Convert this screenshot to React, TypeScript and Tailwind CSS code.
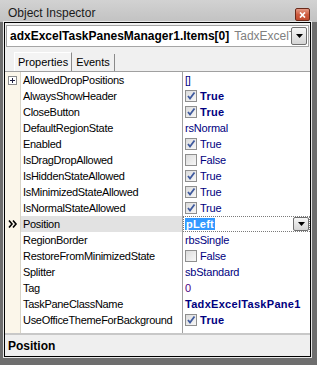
import React from "react";

type Row = {
  name: string;
  value: string;
  check?: boolean;
  checked?: boolean;
  bold?: boolean;
  plus?: boolean;
  selected?: boolean;
  color?: string;
};

const rows: Row[] = [
  { name: "AllowedDropPositions", value: "[]", plus: true },
  { name: "AlwaysShowHeader", value: "True", check: true, checked: true, bold: true },
  { name: "CloseButton", value: "True", check: true, checked: true, bold: true },
  { name: "DefaultRegionState", value: "rsNormal" },
  { name: "Enabled", value: "True", check: true, checked: true },
  { name: "IsDragDropAllowed", value: "False", check: true, checked: false },
  { name: "IsHiddenStateAllowed", value: "True", check: true, checked: true },
  { name: "IsMinimizedStateAllowed", value: "True", check: true, checked: true },
  { name: "IsNormalStateAllowed", value: "True", check: true, checked: true },
  { name: "Position", value: "pLeft", selected: true },
  { name: "RegionBorder", value: "rbsSingle" },
  { name: "RestoreFromMinimizedState", value: "False", check: true, checked: false },
  { name: "Splitter", value: "sbStandard" },
  { name: "Tag", value: "0", color: "#4b0082" },
  { name: "TaskPaneClassName", value: "TadxExcelTaskPane1", bold: true },
  { name: "UseOfficeThemeForBackground", value: "True", check: true, checked: true, bold: true },
];

const font = { fontFamily: '"Liberation Sans", Arial, sans-serif' };

function CheckBox({ checked }: { checked: boolean }) {
  return (
    <div className="w-[12px] h-[12px] shrink-0 border border-[#8f8f8f] bg-gradient-to-br from-[#dcdcdc] to-[#f7f7f7] relative">
      {checked && (
        <svg width="10" height="10" viewBox="0 0 10 10" className="absolute left-0 top-0">
          <path d="M2 5 L4 7.5 L8.5 1.5" fill="none" stroke="#3f5a9e" strokeWidth="1.8" />
        </svg>
      )}
    </div>
  );
}

function DropButton({ h }: { h: number }) {
  return (
    <div
      className="w-[16px] shrink-0 rounded-[2px] border border-[#6f6f6f] bg-gradient-to-b from-[#f6f6f6] to-[#d5d5d5] flex items-center justify-center"
      style={{ height: h }}
    >
      <svg width="7" height="4" viewBox="0 0 7 4">
        <path d="M0 0 H7 L3.5 4 Z" fill="#000" />
      </svg>
    </div>
  );
}

function GridRow({ r }: { r: Row }) {
  return (
    <div className="flex h-[16px]">
      <div className="w-[16px] shrink-0 bg-[#fbf6ea] border-r border-[#d8d4c8] flex items-center justify-center">
        {r.plus && (
          <div className="w-[9px] h-[9px] border border-[#8a8a8a] bg-white flex items-center justify-center">
            <svg width="5" height="5" viewBox="0 0 5 5">
              <path d="M0 2.5 H5 M2.5 0 V5" stroke="#202040" strokeWidth="1" />
            </svg>
          </div>
        )}
        {r.selected && (
          <svg width="10" height="8" viewBox="0 0 10 8">
            <path d="M1 0.5 L4 4 L1 7.5 M5 0.5 L8 4 L5 7.5" fill="none" stroke="#000" strokeWidth="1.6" />
          </svg>
        )}
      </div>
      <div
        className={`w-[162px] shrink-0 border-r border-[#a0a0a0] pl-[2px] flex items-center overflow-hidden whitespace-nowrap text-[11px] tracking-[-0.3px] text-black ${
          r.selected ? "bg-[#e2e2e2]" : ""
        }`}
      >
        {r.name}
      </div>
      <div
        className={`flex-1 flex items-center overflow-hidden whitespace-nowrap text-[11px] ${
          r.selected ? "border border-dotted border-[#7a7a7a] pl-[1px] pr-[0px]" : "pl-[2px]"
        }`}
        style={{ color: r.color ?? "#000080" }}
      >
        {r.check && (
          <div className="mr-[3px]">
            <CheckBox checked={!!r.checked} />
          </div>
        )}
        {r.selected ? (
          <>
            <span className="bg-[#3399ff] text-white font-bold px-[1px] h-[12px] leading-[12px] tracking-[0.2px]">
              {r.value}
            </span>
            <div className="flex-1" />
            <DropButton h={14} />
          </>
        ) : (
          <span className={r.bold ? "font-bold tracking-[0.3px]" : "tracking-[-0.2px]"}>{r.value}</span>
        )}
      </div>
    </div>
  );
}

export default function App() {
  return (
    <div className="w-[317px] h-[365px] bg-[#c4c4c4] flex flex-col overflow-hidden" style={font}>
      {/* title bar */}
      <div className="h-[22px] shrink-0 flex items-start justify-between pl-[8px] pr-[7px] bg-gradient-to-b from-[#d2d2d2] to-[#c2c2c2]">
        <div className="text-[12px] text-[#1a1a1a] leading-[14px] mt-[6px]">Object Inspector</div>
        <div className="mt-[8px] w-[15px] h-[13px] rounded-[2px] border border-[#6a2a1a] bg-gradient-to-b from-[#e49a86] via-[#cf5c40] to-[#c04a2e] flex items-center justify-center">
          <svg width="7" height="6" viewBox="0 0 7 6">
            <path d="M1 0.5 L6 5.5 M6 0.5 L1 5.5" stroke="#fff" strokeWidth="1.7" />
          </svg>
        </div>
      </div>
      {/* body */}
      <div className="flex-1 flex flex-col pl-[4px] pr-[6px] pb-[8px] bg-[#6e6e6e]">
        <div className="flex-1 flex flex-col border border-black bg-[#f0f0f0] outline outline-1 outline-[#e8e8e8]">
          {/* combo */}
          <div className="h-[22px] mt-[2px] mx-[1px] flex items-center bg-white border border-[#a5a5a5] pl-[3px] pr-[1px]">
            <span className="text-[12px] font-bold text-black whitespace-nowrap">adxExcelTaskPanesManager1.Items[0]</span>
            <span className="ml-[5px] text-[12px] text-[#808080] whitespace-nowrap overflow-hidden flex-1">TadxExcelTaskPane</span>
            <DropButton h={18} />
          </div>
          {/* tabs */}
          <div className="h-[25px] flex items-end pl-[9px] border-b border-[#a0a0a0]">
            <div className="h-[19px] px-[3px] border-l border-t border-r border-l-white border-t-white border-r-[#8a8a8a] bg-[#f4f4f4] text-[11px] flex items-center">
              Properties
            </div>
            <div className="h-[17px] px-[4px] border-r border-[#8a8a8a] text-[11px] flex items-center">Events</div>
          </div>
          {/* grid */}
          <div className="flex-1 flex flex-col bg-white">
            {rows.map((r) => (
              <GridRow key={r.name} r={r} />
            ))}
            <div className="flex-1 flex">
              <div className="w-[16px] shrink-0 bg-[#fbf6ea] border-r border-[#d8d4c8]" />
              <div className="w-[162px] shrink-0 border-r border-[#a0a0a0]" />
              <div className="flex-1" />
            </div>
          </div>
          {/* status */}
          <div className="h-[23px] shrink-0 border-t-2 border-[#c8c8c8] bg-[#efefef] flex items-center pl-[3px]">
            <span className="text-[12px] font-bold text-black">Position</span>
          </div>
        </div>
      </div>
    </div>
  );
}
